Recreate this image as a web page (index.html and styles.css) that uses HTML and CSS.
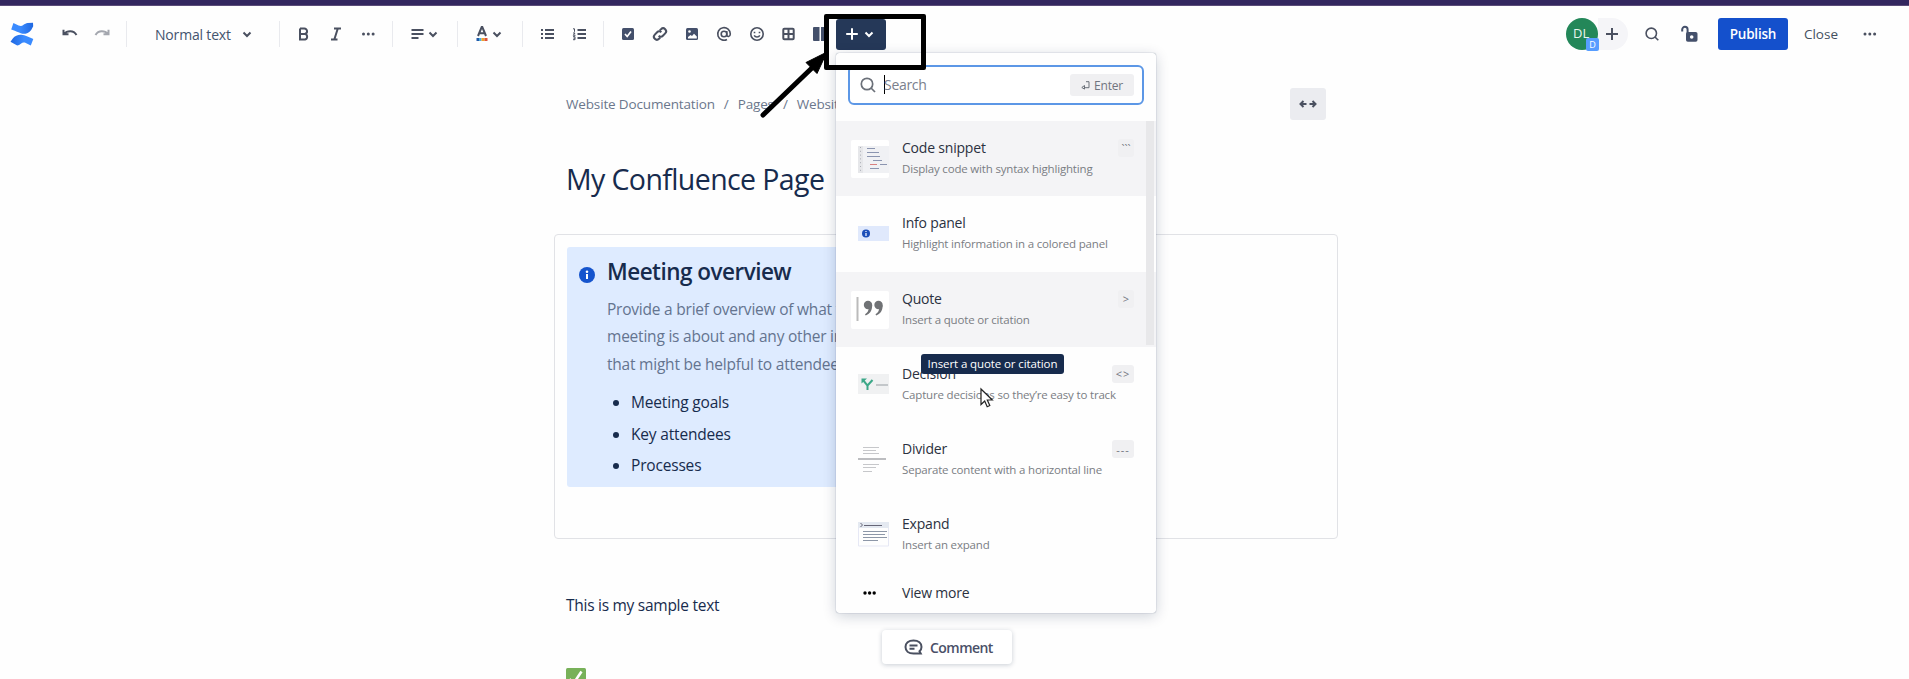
FILE: index.html
```html
<!DOCTYPE html>
<html lang="en">
<head>
<meta charset="utf-8">
<title>My Confluence Page</title>
<link rel="stylesheet" href="styles.css">
</head>
<body>
<div class="topline"></div>
<header class="toolbar">
  <div class="group logo">
    <svg width="24" height="24" viewBox="0 0 24 24"><defs><linearGradient id="lg1" x1="1" y1="0" x2="0" y2="0"><stop offset="0" stop-color="#1f67e0"/><stop offset=".6" stop-color="#3a8bff"/></linearGradient><linearGradient id="lg2" x1="0" y1="0" x2="1" y2="0"><stop offset="0" stop-color="#1f67e0"/><stop offset=".6" stop-color="#3a8bff"/></linearGradient></defs><path fill="url(#lg1)" d="M3.4 1l5.2 2.500c1.700.8 3.500.6 4.600-.4 1.500-1.300 3-1.900 4.300-2.200L23 .8l.2 3.400-2 3.700C19 11 15.500 12 12.500 11.700 10.500 11.500 7.500 9.600 1.200 7.500z"/><path fill="url(#lg2)" d="M20.800 23.500l-5-2.500c-1.700-.8-3.500-.6-4.600.4-1.500 1.300-2.700 1.700-4 2L.5 19.800 2.800 16.400C5 13.400 8.500 12.400 11.500 12.700c3.500.4 7 2.200 11.800 4.200z"/></svg>
  </div>
  <div class="group history">
    <svg width="18" height="12" viewBox="0 0 18 12" class="ink"><path d="M2.500 1.800v4.500h5M3 6C6 2.500 12.500 1.800 15.500 7"/></svg>
    <svg width="18" height="12" viewBox="0 0 18 12" class="ink faded"><path d="M15.500 1.800v4.500h-5M15 6C12 2.500 5.500 1.800 2.500 7"/></svg>
  </div>
  <div class="group style"><span>Normal text</span><svg width="10" height="7" viewBox="0 0 10 7" class="ink"><path d="M1.500 1.500L5 5l3.500-3.500"/></svg></div>
  <div class="group format">
    <svg width="12" height="14" viewBox="0 0 12 14" class="ink"><path d="M2 1.500v11h5a2.900 2.900 0 0 0 0-5.600H2M2 1.500h4.200a2.600 2.600 0 0 1 .3 5.400"/></svg>
    <svg width="12" height="14" viewBox="0 0 12 14" class="ink"><path d="M4 1.500h7M1 12.500h6.500M7.800 1.500l-3.500 11"/></svg>
    <svg width="14" height="4" viewBox="0 0 14 4" class="solid"><circle cx="1.500" cy="2" r="1.500"/><circle cx="6.300" cy="2" r="1.500"/><circle cx="11.100" cy="2" r="1.500"/></svg>
  </div>
  <div class="group align">
    <svg width="13" height="12" viewBox="0 0 13 12" class="ink"><path d="M.5 2h12M.5 6h12M.5 10h7"/></svg>
    <svg width="10" height="7" viewBox="0 0 10 7" class="ink"><path d="M1.500 1.500L5 5l3.500-3.500"/></svg>
  </div>
  <div class="group color">
    <svg width="14" height="16" viewBox="0 0 14 16" class="ink"><path d="M3 10L6.700 1h.6L11 10M4.300 7.300h5.400"/><path stroke="#2459a8" stroke-width="3" d="M1.500 13.500h3"/><path stroke="#4bb0df" stroke-width="3" d="M4 13.500h2.500"/><path stroke="#eda22b" stroke-width="3" d="M6.500 13.500h3"/><path stroke="#e0533a" stroke-width="3" d="M9.500 13.500h3"/></svg>
    <svg width="10" height="7" viewBox="0 0 10 7" class="ink"><path d="M1.500 1.500L5 5l3.500-3.500"/></svg>
  </div>
  <div class="group lists">
    <svg width="13" height="12" viewBox="0 0 13 12" class="ink"><path d="M4 2h9M4 6h9M4 10h9M0 2h2M0 6h2M0 10h2"/></svg>
    <svg width="13" height="12" viewBox="0 0 13 12" class="ink"><path d="M4.500 2h8.500M4.500 6h8.500M4.500 10h8.500"/><path stroke-width="1" d="M0 .8h1.500v3M0 5h2L.3 7.300H2.500M0 8.700h2v3H0M.5 10.200H2"/></svg>
  </div>
  <div class="group insert">
    <svg width="14" height="14" viewBox="0 0 14 14"><rect x="1" y="1" width="12" height="12" rx="1.500" fill="#44506b"/><path d="M4 7l2.200 2.500L10 4.500" fill="none" stroke="#fff" stroke-width="1.700"/></svg>
    <svg width="16" height="16" viewBox="0 0 16 16" class="ink"><path d="M6.700 9.800a2.900 2.900 0 0 0 4.200 0l2.300-2.400a2.900 2.900 0 0 0-4.200-4.200L7.800 4.300M9.300 6.200a2.900 2.900 0 0 0-4.200 0L2.800 8.600a2.900 2.900 0 0 0 4.200 4.200l1.200-1.100"/></svg>
    <svg width="14" height="14" viewBox="0 0 14 14"><rect x="1" y="1" width="12" height="12" rx="1.500" fill="#44506b"/><circle cx="4.500" cy="4.500" r="1.300" fill="#fff"/><path d="M3 11.500V10l2.500-2 1.500 1 2-2.200 2.800 2.700v2z" fill="#fff"/></svg>
    <svg width="16" height="16" viewBox="0 0 16 16" class="ink thin"><circle cx="8" cy="8" r="2.800"/><path d="M10.800 5v4c0 2.300 3.500 2 3.500-1A6.300 6.300 0 1 0 11 13.500"/></svg>
    <svg width="16" height="16" viewBox="0 0 16 16" class="ink thin"><circle cx="8" cy="8" r="6.200"/><path d="M5.200 9.300c1.200 2.300 4.400 2.300 5.600 0M5.500 5.800v1.500M10.500 5.800v1.500"/></svg>
    <svg width="14" height="14" viewBox="0 0 14 14" class="ink"><rect x="1.300" y="1.800" width="10.400" height="10.400" rx="1"/><path d="M6.500 2v10M1.500 7h10"/></svg>
    <svg width="14" height="14" viewBox="0 0 14 14"><path fill="#44506b" d="M1 0h5.500v14H1a1 1 0 0 1-1-1V1a1 1 0 0 1 1-1zM8 0h6v14H8z"/></svg>
  </div>
  <button class="plus"><svg width="14" height="14" viewBox="0 0 14 14"><path d="M7 1.200v11.600M1.200 7h11.600"/></svg><svg width="10" height="7" viewBox="0 0 10 7"><path d="M1.500 1.500L5 5l3.500-3.500"/></svg></button>
  <div class="actions">
    <div class="avatar">DL<span>D</span></div>
    <div class="invite"><svg width="14" height="14" viewBox="0 0 14 14" class="ink"><path d="M7 1v12M1 7h12"/></svg></div>
    <svg width="14" height="14" viewBox="0 0 14 14" class="ink thin search"><circle cx="6.300" cy="6.300" r="5.200"/><path d="M10 10l3.300 3.300"/></svg>
    <svg width="17" height="16" viewBox="0 0 17 16" class="lock"><path d="M1.200 5.500V3.500a2.700 2.700 0 0 1 5.400 0V8" fill="none" stroke="#44506b" stroke-width="2"/><rect x="5" y="6" width="11.500" height="9.800" rx="1.800" fill="#44506b"/><circle cx="10.700" cy="11" r="1.800" fill="#fff"/></svg>
    <button class="publish">Publish</button>
    <span class="close">Close</span>
    <svg width="14" height="4" viewBox="0 0 14 4" class="solid"><circle cx="2" cy="2" r="1.500"/><circle cx="6.800" cy="2" r="1.500"/><circle cx="11.600" cy="2" r="1.500"/></svg>
  </div>
</header>

<main class="page">
  <div class="crumbrow">
    <nav class="crumbs"><span>Website Documentation</span><i>/</i><span>Pages</span><i>/</i><span>Website</span></nav>
    <button class="wide"><svg width="18" height="10" viewBox="0 0 18 10" class="ink"><path d="M7.500 5H1.500M4.500 2l-3 3 3 3M10.500 5h6M13.500 2l3 3-3 3"/></svg></button>
  </div>
  <h1>My Confluence Page</h1>
  <section class="layout">
    <div class="panel">
      <svg class="info" width="16" height="16" viewBox="0 0 16 16"><circle cx="8" cy="8" r="8" fill="#1554cd"/><circle cx="8" cy="4.700" r="1.300" fill="#fff"/><path d="M8 7v5" stroke="#fff" stroke-width="2"/></svg>
      <div>
        <h2>Meeting overview</h2>
        <p>Provide a brief overview of what this<br>meeting is about and any other info<br>that might be helpful to attendees.</p>
        <ul><li>Meeting goals</li><li>Key attendees</li><li>Processes</li></ul>
      </div>
    </div>
  </section>
  <p class="sample">This is my sample text</p>
  <svg class="check" width="20" height="20" viewBox="0 0 20 20"><rect width="20" height="20" rx="1.500" fill="#78b159"/><path d="M3.500 11l4 4.500 8-12" fill="none" stroke="#fff" stroke-width="2.600"/></svg>
</main>

<button class="comment"><svg width="19" height="17" viewBox="0 0 19 17" class="ink"><path d="M15.500 12.300C17 11 17.500 9.500 17.500 8c0-3.700-3-6.500-8-6.500S1.500 4.300 1.500 8s3 6.500 8 6.500h7.200z"/><path d="M5.500 6.500h8M5.500 9.700h5"/></svg>Comment</button>

<div class="menu">
  <div class="searchbox">
    <svg width="16" height="16" viewBox="0 0 16 16"><circle cx="7" cy="7" r="5.700"/><path d="M11 11l4 4"/></svg>
    <span class="caret"></span><span class="ph">Search</span>
    <kbd><svg width="9" height="9" viewBox="0 0 9 9"><path d="M5 .7h3v6H3.500M3.500 4.500v3.600L.8 6.500z"/></svg>Enter</kbd>
  </div>
  <div class="items">
    <div class="item on">
      <svg class="thumb" width="40" height="40" viewBox="0 0 40 40"><rect x="1" y="1" width="38" height="38" rx="2" fill="#fff"/><path fill="#f0f1f4" d="M8 7h31v27H8z"/><path fill="#e6e7ea" d="M8 7h5v27H8z"/><path stroke="#aaadb5" stroke-dasharray="1 2.800" d="M10.500 8v26"/><path stroke="#8b95b0" d="M17 9.500h8M17 13.500h12M17 17.500h13M23 21.500h9M30 25.500h7M20 29.500h9"/><path stroke="#d98080" d="M20 25.500h7"/></svg>
      <div class="txt"><b>Code snippet</b><small>Display code with syntax highlighting</small></div><kbd class="tick">```</kbd>
    </div>
    <div class="item">
      <svg class="thumb" width="40" height="40" viewBox="0 0 40 40"><path fill="#e0e9fc" d="M8 12h31v15H8z"/><circle cx="16" cy="19.500" r="4" fill="#1d4fb8"/><path stroke="#fff" stroke-width="1.200" d="M16 17v1M16 19v3"/></svg>
      <div class="txt"><b>Info panel</b><small>Highlight information in a colored panel</small></div>
    </div>
    <div class="item on">
      <svg class="thumb" width="40" height="40" viewBox="0 0 40 40"><rect x="1" y="1" width="38" height="38" rx="2" fill="#fff"/><path stroke="#bbb" stroke-width="2" d="M7.500 7v24"/><g fill="#707275"><circle cx="18" cy="15" r="4.200"/><path d="M22.200 15c0 6-2.500 9-6.500 10.500l-.7-1.300c2.500-1.500 3.500-3.500 3.700-6z"/><circle cx="28.500" cy="15" r="4.200"/><path d="M32.700 15c0 6-2.500 9-6.500 10.500l-.7-1.300c2.500-1.500 3.500-3.500 3.700-6z"/></g></svg>
      <div class="txt"><b>Quote</b><small>Insert a quote or citation</small></div><kbd>&gt;</kbd>
    </div>
    <div class="item">
      <svg class="thumb" width="40" height="40" viewBox="0 0 40 40"><path fill="#f0f1f2" d="M8 9h31v20H8z"/><path fill="none" stroke="#3ca888" stroke-width="2" d="M17.500 25v-4.500L13 15M17.500 20.500l5-5.500"/><path fill="#3ca888" d="M11.500 13.500h5.500l-5.500 5z"/><path stroke="#b5b8bd" stroke-width="1.500" d="M26 20h12"/></svg>
      <div class="txt"><b>Decision</b><small>Capture decisions so they’re easy to track</small></div><kbd class="long">&lt;&gt;</kbd>
    </div>
    <div class="item">
      <svg class="thumb" width="40" height="40" viewBox="0 0 40 40"><path stroke="#c6c7ca" d="M13 7.500h16M13 10.500h13M13 13.500h16M13 24.500h16M13 27.500h13M13 31.500h9"/><path stroke="#bcbdc0" stroke-width="2" d="M8 19h28"/></svg>
      <div class="txt"><b>Divider</b><small>Separate content with a horizontal line</small></div><kbd class="long">---</kbd>
    </div>
    <div class="item">
      <svg class="thumb" width="40" height="40" viewBox="0 0 40 40"><path fill="none" stroke="#e6e8f5" d="M8.500 8v23h30V8"/><path fill="#e4e9f1" d="M8 7h31v6H8z"/><path stroke="#667" fill="none" d="M10.500 8l2 2-2 2M14 10.500h18"/><path stroke="#8d97a8" d="M13 16.500h24M13 19.500h22M13 22.500h24M13 25.500h15"/></svg>
      <div class="txt"><b>Expand</b><small>Insert an expand</small></div>
    </div>
  </div>
  <div class="more"><svg width="14" height="4" viewBox="0 0 14 4"><circle cx="2" cy="2" r="1.700"/><circle cx="6.600" cy="2" r="1.700"/><circle cx="11.200" cy="2" r="1.700"/></svg><b>View more</b></div>
  <div class="scroll"></div>
</div>
<div class="tooltip">Insert a quote or citation</div>
<svg class="cursor" width="14" height="20" viewBox="0 0 14 20"><path d="M1 1v15.500l3.700-3.500 2.500 5.700 2.600-1.200-2.500-5.500h5z" fill="#fff" stroke="#222" stroke-width="1.200"/></svg>
<div class="callout"></div>
<svg class="arrow" width="90" height="80" viewBox="0 0 90 80"><path d="M9 71L60 22" stroke="#000" stroke-width="5" stroke-linecap="round"/><path d="M73 8L52 18.500l11 11z" stroke="#000" stroke-width="1"/></svg>
</body>
</html>
```
FILE: styles.css
```css
* { box-sizing: border-box; }
body {
  margin: 0;
  height: 679px;
  overflow: hidden;
  position: relative;
  background: #fefefe;
  color: #172b4d;
  font-family: "Open Sans", "Noto Sans", sans-serif;
}
svg { display: block; flex: none; overflow: visible; }
button { border: 0; font-family: inherit; padding: 0; }
.ink { fill: none; stroke: #4a5060; stroke-width: 2; }
.thin { stroke-width: 1.6; }
.faded { opacity: .5; }
.solid { fill: #4a5060; }

.topline { height: 6px; background: #33275f; border-bottom: 1px solid #5b4c78; }
.toolbar { height: 56px; display: flex; align-items: center; }
.group { height: 26px; display: flex; align-items: center; border-right: 1px solid #e9eaee; }
.logo { width: 61px; padding-left: 10px; border: 0; }
.history { width: 66px; gap: 14px; }
.style { width: 153px; padding-left: 28px; gap: 11px; font-size: 14px; letter-spacing: -.18px; color: #44546f; }
.format { width: 113px; padding-left: 18px; gap: 20px; }
.align { width: 65px; padding-left: 18px; gap: 4px; }
.color { width: 65px; padding-left: 17px; gap: 3px; }
.lists { width: 81px; padding-left: 18px; gap: 19px; }
.insert { width: 232px; padding-left: 17px; gap: 17px; border: 0; }
.plus {
  width: 50px; height: 31px; display: flex; align-items: center; justify-content: center; gap: 5px;
  padding-right: 3px; background: #253858; border-radius: 3px;
}
.plus path { fill: none; stroke: #fff; stroke-width: 2; }
.actions { margin-left: auto; display: flex; align-items: center; padding-right: 32px; }
.avatar {
  position: relative; width: 32px; height: 32px; border-radius: 50%; background: #238759;
  color: #eaf5ef; font-size: 13px; line-height: 31px; padding-left: 7px;
}
.avatar span {
  position: absolute; left: 20px; top: 20px; width: 13px; height: 13px; border-radius: 2px;
  background: #579dff; color: #fff; font-size: 9px; line-height: 13px; text-align: center;
}
.invite {
  width: 30px; height: 32px; display: flex; align-items: center; background: #f5f5f8;
  border-radius: 0 16px 16px 0; padding-left: 7px;
}
.search { margin-left: 17px; }
.lock { margin-left: 22px; }
.publish {
  width: 70px; height: 32px; margin-left: 20px; border-radius: 3px; background: #1450cc;
  color: #fff; font-size: 13.500px; font-weight: 600; letter-spacing: -.2px;
}
.close { margin: 0 25px 0 16px; font-size: 13.500px; color: #44505f; }

.page { width: 784px; margin-left: 554px; }
.crumbrow { height: 84px; display: flex; justify-content: space-between; padding: 26px 12px 0 12px; }
.crumbs { display: flex; height: 32px; align-items: center; font-size: 13.500px; letter-spacing: -.15px; color: #6b778c; }
.crumbs i { font-style: normal; margin: 0 9px; }
.wide { width: 36px; height: 32px; display: flex; align-items: center; justify-content: center; background: #ebecf0; border-radius: 3px; }
h1 { margin: 11px 0 0 12px; height: 77px; line-height: 44px; font-size: 28.500px; letter-spacing: -.6px; font-weight: 400; }
.layout { height: 305px; border: 1px solid #e1e2e6; border-radius: 4px; padding: 12px 12px; }
.panel { width: 380px; height: 240px; background: #deebff; border-radius: 3px; display: flex; padding: 9px 0 0 12px; }
.info { margin: 11px 12px 0 0; }
h2 { margin: 0; font-size: 22.500px; line-height: 32px; letter-spacing: -.52px; font-weight: 600; white-space: nowrap; }
.panel p { margin: 8px 0 0; font-size: 15.500px; line-height: 27.400px; letter-spacing: -.22px; color: #64748f; white-space: nowrap; }
ul { margin: 9px 0 0; padding-left: 24px; }
li { font-size: 15.500px; line-height: 31.400px; letter-spacing: -.18px; }
.sample { margin: 52px 0 0 12px; font-size: 15.500px; line-height: 28px; letter-spacing: -.27px; }
.check { margin: 49px 0 0 12px; }

.comment {
  position: absolute; left: 882px; top: 630px; width: 130px; height: 34px; background: #fff;
  border-radius: 4px; box-shadow: 0 1px 5px rgba(9, 30, 66, .22);
  display: flex; align-items: center; padding-left: 22px; gap: 7px;
  color: #4a5068; font-size: 14px; font-weight: 600; letter-spacing: -.55px;
}
.menu {
  position: absolute; left: 836px; top: 53px; width: 320px; height: 560px; padding: 12px 0 0;
  background: #fefefe; border-radius: 3px; box-shadow: 0 0 1px rgba(9, 30, 66, .6), 0 3px 14px rgba(9, 30, 66, .2);
}
.searchbox {
  width: 296px; height: 40px; margin-left: 12px; border: 2px solid #5c97e6; border-radius: 6px; background: #fff;
  display: flex; align-items: center; padding: 0 8px 0 10px; color: #7a808c;
}
.searchbox svg { fill: none; stroke: #6b7079; stroke-width: 1.700; }
.caret { width: 1px; height: 19px; margin: -1px -1px 0 8px; background: #000; }
.ph { margin-top: -2px; font-size: 14px; letter-spacing: -.3px; }
.searchbox kbd { margin-left: auto; width: 64px; height: 22px; gap: 4px; font-size: 12px; letter-spacing: -.2px; }
.searchbox kbd svg { stroke-width: 1; }
kbd {
  display: flex; flex: none; align-items: center; justify-content: center; width: 16px; height: 18px;
  background: #f0f0f2; border-radius: 3px; color: #70757f; font: 11px "Open Sans", sans-serif; white-space: nowrap;
}
kbd.long { width: 22px; letter-spacing: 1px; }
.items { margin-top: 16px; }
.item { height: 75.300px; display: flex; align-items: flex-start; padding: 18px 22px 0 14px; }
.item.on { background: #f4f4f6; }
.txt { flex: 1; min-width: 0; display: flex; flex-direction: column; padding-left: 12px; margin-top: -1px; }
.txt b, .more b { font-size: 14px; line-height: 20px; letter-spacing: -.2px; font-weight: 400; color: #2b3140; }
.txt small { font-size: 11.500px; line-height: 21px; letter-spacing: -.18px; color: #7a7d83; white-space: nowrap; }
.more { display: flex; align-items: center; height: 38px; margin-top: 1px; padding-left: 27px; gap: 25px; }
.scroll { position: absolute; right: 2px; top: 68px; width: 8px; height: 224px; background: #e8e8ea; }
.tooltip {
  position: absolute; left: 921px; top: 354px; width: 143px; height: 20px; border-radius: 3px; background: #172b4d;
  color: #fff; font-size: 11.500px; line-height: 20px; letter-spacing: -.1px; text-align: center; white-space: nowrap;
}
.cursor { position: absolute; left: 980px; top: 388px; }
.callout { position: absolute; left: 824px; top: 14px; width: 102px; height: 56px; border: 5px solid #000; border-radius: 2px; }
.arrow { position: absolute; left: 754px; top: 44px; }
```
